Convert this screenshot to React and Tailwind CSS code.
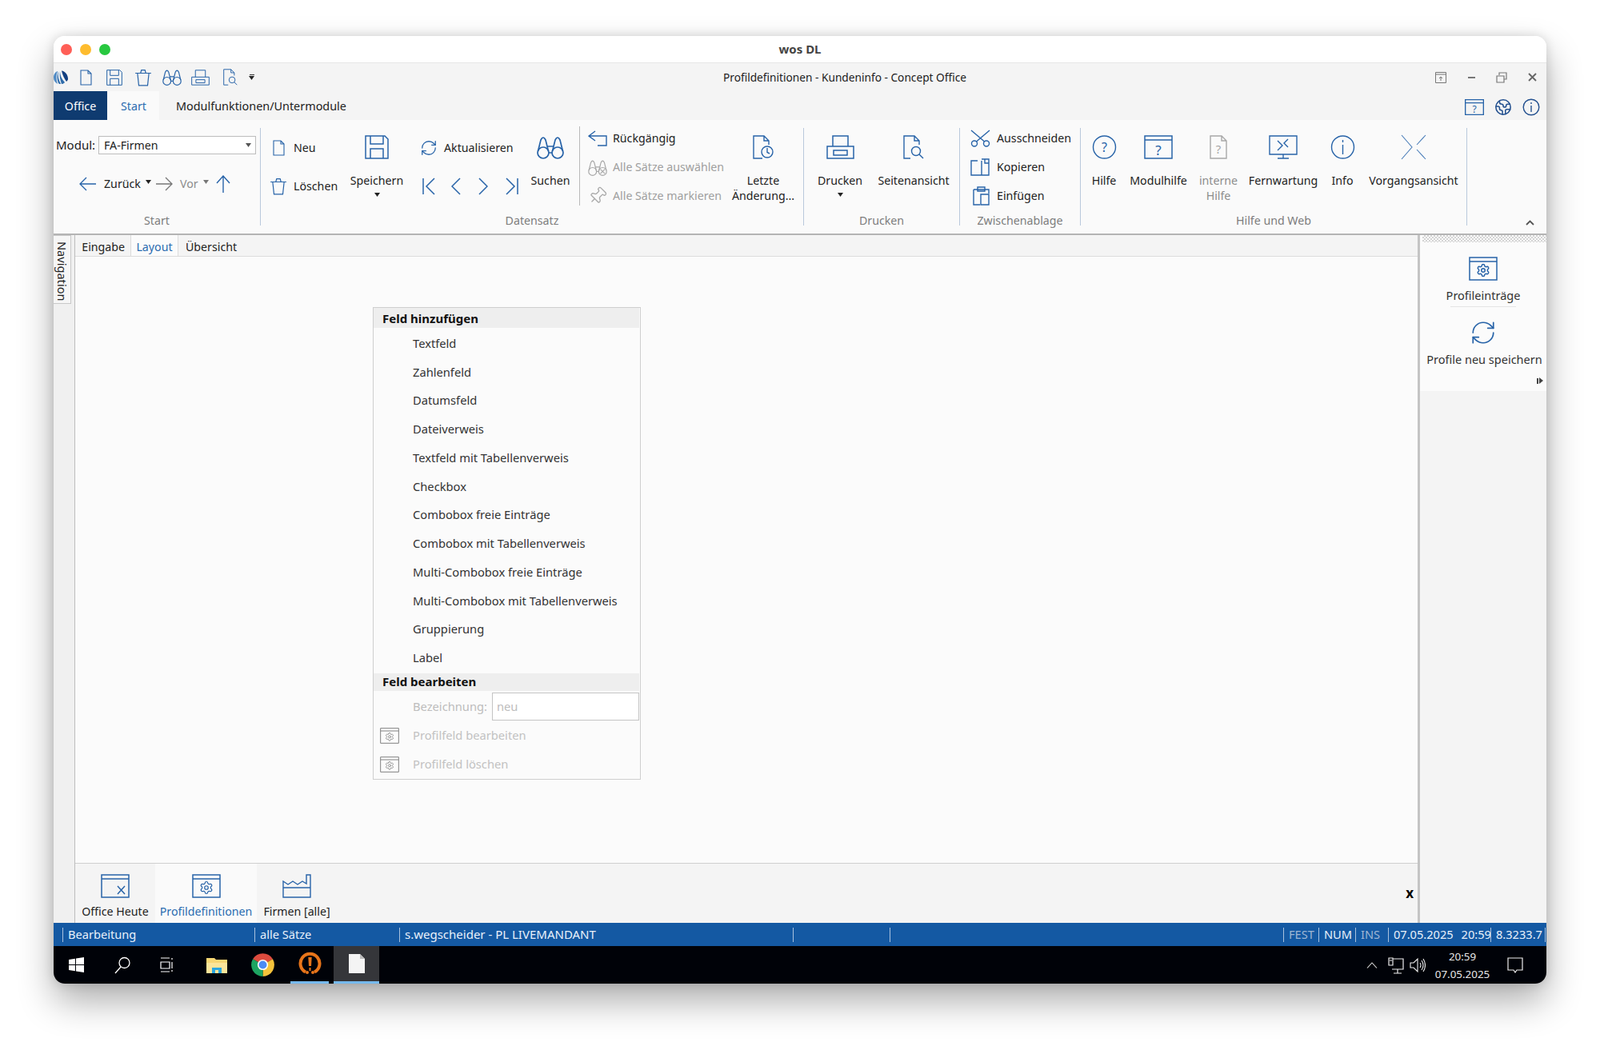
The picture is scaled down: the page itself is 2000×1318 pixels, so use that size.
import { Settings, RefreshCw, Pin, Earth } from "lucide-react";

const BLUE = "#2763a8";
const GRAY = "#a8a8a8";

// generic outline icon, sizes are the real pixel box of the drawing
function Ico({ w, h, vw, vh, c = BLUE, sw = 1.4, children, className = "" }) {
  return (
    <svg
      width={w}
      height={h}
      viewBox={`0 0 ${vw || w} ${vh || h}`}
      fill="none"
      stroke={c}
      strokeWidth={sw}
      className={`block shrink-0 ${className}`}
    >
      {children}
    </svg>
  );
}

const DocIco = ({ w = 15, h = 20, c }) => (
  <Ico w={w} h={h} vw={15} vh={20} c={c} sw={1.1}>
    <path d="M1 1H10L14 5V19H1ZM10 1V5H14" />
  </Ico>
);
const SaveIco = ({ s = 30, c }) => (
  <Ico w={s} h={s} vw={30} vh={30} c={c} sw={1.5}>
    <path d="M1 1H25L29 5V29H1ZM7 1V11H23V1M7 29V17H23V29" />
  </Ico>
);
const TrashIco = ({ s = 22, c }) => (
  <Ico w={s} h={s} vw={20} vh={20} c={c} sw={1.1}>
    <path d="M1 5H19M3.5 5L5 19H15L16.5 5M7 5L8 1.5H12L13 5" />
  </Ico>
);
const BinoIco = ({ w = 34, h = 30, c, x }) => (
  <Ico w={w} h={h} vw={34} vh={30} c={c} sw={1.7}>
    <circle cx="8" cy="22" r="7" />
    <circle cx="26" cy="22" r="7" />
    <path d="M1.5 20L5 6Q8 0 11 6L14.5 20M19.5 20L23 6Q26 0 29 6L32.5 20M15 22H19M13 14H21" />
    {x && <path d="M22 18L30 26M30 18L22 26" />}
  </Ico>
);
const PrintIco = ({ w = 35, h = 30, c }) => (
  <Ico w={w} h={h} vw={35} vh={30} c={c} sw={1.5}>
    <path d="M1 14H34V29H1ZM8 14V1H27V14M9 19H26V25H9Z" />
  </Ico>
);
const PreviewIco = ({ w = 26, h = 30, c }) => (
  <Ico w={w} h={h} vw={26} vh={30} c={c} sw={1.4}>
    <path d="M9 29H1V1H14L20 7V12M14 1V7H20" />
    <circle cx="16" cy="20" r="5.5" />
    <path d="M20 24L25 29" />
  </Ico>
);
const ClockDocIco = () => (
  <Ico w={27} h={30} sw={1.4}>
    <path d="M12 29H1V1H14L20 7V12M14 1V7H20" />
    <circle cx="18" cy="21" r="7" />
    <path d="M18 16V21.5L21 23" />
  </Ico>
);
const NavIco = ({ d, w = 16 }) => (
  <Ico w={w} h={22} sw={1.5}>
    <path d={d} />
  </Ico>
);
const WinIco = ({ children, w = 36, h = 30, c }) => (
  <Ico w={w} h={h} vw={36} vh={30} c={c} sw={1.5}>
    <path d="M1 1H35V29H1ZM1 6H35" />
    {children}
  </Ico>
);
const GearWin = ({ w = 36, h = 30, c = BLUE, sw = 1.6 }) => (
  <WinIco w={w} h={h} c={c}>
    <Settings x="9" y="8" width="18" height="18" stroke={c} strokeWidth={sw} />
  </WinIco>
);
const Mark = ({ t, c = BLUE, x, y, size = 15 }) => (
  <text
    x={x}
    y={y}
    textAnchor="middle"
    fontFamily="Noto Sans, sans-serif"
    fontSize={size}
    fill={c}
    stroke="none"
  >
    {t}
  </text>
);

function Caret({ c = "#222", className = "" }) {
  return (
    <svg width="7" height="5" viewBox="0 0 7 5" className={`block shrink-0 ${className}`}>
      <path d="M0 0H7L3.5 5Z" fill={c} />
    </svg>
  );
}

// ribbon button with the icon on top
function BigBtn({ width, icon, label, line2, caret, muted }) {
  return (
    <div className={`flex shrink-0 flex-col items-center pt-[9px] ${width}`}>
      <div className="flex h-[30px] items-center justify-center">{icon}</div>
      <div
        className={`mt-[17px] whitespace-nowrap text-center leading-[19px] ${
          muted ? "text-[#8d8d8d]" : "text-[#222]"
        }`}
      >
        {label}
        {line2 && <div>{line2}</div>}
      </div>
      {caret && <Caret className="mt-[6px]" />}
    </div>
  );
}

function SmallBtn({ icon, label, muted, iconBox = "w-[31px]" }) {
  return (
    <div className="flex h-[36px] items-center">
      <div className={`flex items-center ${iconBox}`}>{icon}</div>
      <span className={`whitespace-nowrap ${muted ? "text-[#a0a0a0]" : "text-[#222]"}`}>{label}</span>
    </div>
  );
}

function Group({ width, caption, children }) {
  return (
    <div className={`mt-[10px] flex h-[122px] shrink-0 flex-col border-r border-[#b9c9dc] ${width}`}>
      <div className="flex h-[106px] shrink-0">{children}</div>
      <div className="h-[20px] shrink-0 text-center leading-[20px] text-[#7d7d7d]">{caption}</div>
    </div>
  );
}

function QuickBar() {
  return (
    <div className="relative flex h-[35px] items-center bg-[#f4f4f4]">
      <svg width="19" height="18" viewBox="0 0 19 18" fill="none" className="block shrink-0">
        <path d="M0 9C0 5 2 2 5 1C3 5 3 12 5 17C2 15 0 13 0 9Z" fill="#4f8ac4" />
        <path d="M6 1C5 6 6 12 9 17C7 17 7 17 6 16C4 12 4 5 6 1Z" fill="#2f6cab" />
        <path d="M8 1C8 6 10 11 14 15C12 17 11 17 10 17C8 12 7 6 8 1Z" fill="#2f6cab" />
        <path d="M10 0.5C14 1 18 5 18 11C18 12 17 13 16 14C13 10 11 5 10 0.5Z" fill="#123f80" />
      </svg>
      <div className="ml-[14px]"><DocIco w={15} h={20} /></div>
      <div className="ml-[18px]"><SaveIco s={20} /></div>
      <div className="ml-[15px]"><TrashIco s={22} /></div>
      <div className="ml-[13px]"><BinoIco w={24} h={21} /></div>
      <div className="ml-[12px]"><PrintIco w={23} h={20} /></div>
      <div className="ml-[17px]"><PreviewIco w={18} h={21} /></div>
      <div className="ml-[14px] flex flex-col items-center gap-[1px]">
        <div className="h-[1px] w-[6px] bg-[#333]" />
        <Caret />
      </div>
      <div className="absolute left-0 right-0 top-0 flex h-[35px] items-center justify-center pt-[1px] text-[13.7px] text-[#222]">
        <span className="ml-[112px]">Profildefinitionen - Kundeninfo - Concept Office</span>
      </div>
      <div className="relative ml-auto mr-[11px] flex items-center gap-[24px]">
        <div className="flex w-[14px] justify-center">
          <svg width="14" height="14" viewBox="0 0 14 14" fill="none" stroke="#777" className="block">
            <path d="M.5.5H13.5V13.5H.5ZM.5 3H13.5M7 11V6M5 8L7 6L9 8" />
          </svg>
        </div>
        <div className="flex w-[14px] justify-center">
          <div className="h-[2px] w-[9px] bg-[#777]" />
        </div>
        <div className="flex w-[14px] justify-center">
          <svg width="14" height="14" viewBox="0 0 14 14" fill="none" stroke="#777" strokeWidth="1.2" className="block">
            <path d="M4 4V1H13V9H10M1 5H10V13H1Z" />
          </svg>
        </div>
        <div className="flex w-[14px] justify-center">
          <svg width="11" height="11" viewBox="0 0 11 11" fill="none" stroke="#666" strokeWidth="1.9" className="block">
            <path d="M1 1L10 10M10 1L1 10" />
          </svg>
        </div>
      </div>
    </div>
  );
}

function TabsBar() {
  return (
    <div className="flex h-[36px] items-stretch bg-[#f4f4f4]">
      <div className="flex w-[67px] items-center justify-center bg-[#0f3b70] pt-[1px] text-white">Office</div>
      <div className="flex w-[65px] items-center justify-center bg-[#fafafa] pl-[1px] pt-[1px] text-[#2b6cb0]">Start</div>
      <div className="ml-[21px] flex items-center pt-[1px] text-[14.4px] text-[#222]">Modulfunktionen/Untermodule</div>
      <div className="ml-auto mr-[8px] flex items-center gap-[13px] pt-[4px]">
        <Ico w={24} h={20} vw={36} vh={30} sw={2}>
          <path d="M1 1H35V29H1ZM1 7H35" />
          <Mark t="?" x="18" y="26" size="18" />
        </Ico>
        <Earth size={22} color="#23508f" strokeWidth={1.7} />
        <Ico w={22} h={22} vw={22} vh={22} c="#23508f" sw={1.4}>
          <circle cx="11" cy="11" r="9.8" />
          <path d="M11 9V17M11 5V7" />
        </Ico>
      </div>
    </div>
  );
}

function Ribbon() {
  return (
    <div className="relative flex h-[144px] border-b-2 border-[#b4b4b4] bg-[#fafafa]">
      <Group width="w-[259px]" caption="Start">
        <div className="flex flex-col pl-[3px]">
          <div className="mt-[10px] flex h-[23px] items-center">
            <span className="mr-[4px] w-[49px] overflow-hidden whitespace-nowrap text-[15px] text-[#222]">Modul:</span>
            <div className="flex h-[23px] w-[197px] items-center justify-between border border-[#bdbdbd] bg-white pl-[6px] pr-[5px] text-[#222]">
              FA-Firmen
              <Caret c="#555" />
            </div>
          </div>
          <div className="ml-[29px] mt-[25px] flex h-[24px] items-center">
            <Ico w={21} h={18} c={BLUE} sw={1.3}><path d="M9 1L1 9L9 17M1 9H21" /></Ico>
            <span className="ml-[10px] text-[#222]">Zurück</span>
            <Caret className="ml-[6px] mb-[6px]" />
            <Ico w={21} h={18} c="#777" sw={1.3} className="ml-[6px]"><path d="M12 1L20 9L12 17M0 9H20" /></Ico>
            <span className="ml-[9px] text-[#8d8d8d]">Vor</span>
            <Caret c="#777" className="ml-[6px] mb-[6px]" />
            <Ico w={20} h={22} c={BLUE} sw={1.4} className="ml-[8px]"><path d="M2 10L10 1L18 10M10 1V22" /></Ico>
          </div>
        </div>
      </Group>

      <Group width="w-[679px]" caption="Datensatz">
        <div className="w-[115px] shrink-0 pt-[1px]">
          <div className="ml-[15px] flex h-[48px] items-center">
            <DocIco />
            <span className="ml-[11px] text-[#222]">Neu</span>
          </div>
          <div className="ml-[11px] flex h-[48px] items-center">
            <TrashIco />
            <span className="ml-[8px] text-[#222]">Löschen</span>
          </div>
        </div>
        <BigBtn width="w-[60px]" icon={<SaveIco />} label="Speichern" caret />
        <div className="w-[157px] shrink-0 pl-[24px] pt-[1px]">
          <div className="flex h-[48px] items-center">
            <RefreshCw size={22} color={BLUE} strokeWidth={1.4} />
            <span className="ml-[8px] text-[#222]">Aktualisieren</span>
          </div>
          <div className="ml-[3px] flex h-[48px] items-center gap-[20px]">
            <NavIco d="M1 1V21M15 1L5 11L15 21" />
            <NavIco w={12} d="M11 1L1 11L11 21" />
            <div className="ml-[2px]"><NavIco w={12} d="M1 1L11 11L1 21" /></div>
            <div className="ml-[2px]"><NavIco d="M15 1V21M1 1L11 11L1 21" /></div>
          </div>
        </div>
        <BigBtn width="w-[60px]" icon={<BinoIco />} label="Suchen" />
        <div className="ml-[6px] mt-[-2px] h-[99px] w-[1px] shrink-0 bg-[#b9b9b9]" />
        <div className="mt-[-5px] w-[189px] shrink-0 pl-[10px]">
          <SmallBtn
            icon={<Ico w={24} h={20}><path d="M9 1L1 7L9 13M1 7H23V19H12" /></Ico>}
            label="Rückgängig"
          />
          <SmallBtn icon={<BinoIco w={24} h={21} c={GRAY} x />} label="Alle Sätze auswählen" muted />
          <SmallBtn
            icon={<Pin size={24} color={GRAY} strokeWidth={1.3} className="rotate-45" />}
            label="Alle Sätze markieren"
            muted
          />
        </div>
        <BigBtn width="w-[80px]" icon={<ClockDocIco />} label="Letzte" line2="Änderung..." />
      </Group>

      <Group width="w-[195px]" caption="Drucken">
        <BigBtn width="w-[80px] ml-[5px]" icon={<PrintIco />} label="Drucken" caret />
        <BigBtn width="w-[100px] ml-[2px]" icon={<PreviewIco />} label="Seitenansicht" />
      </Group>

      <Group width="w-[151px]" caption="Zwischenablage">
        <div className="mt-[-5px] pl-[13px]">
          <SmallBtn
            iconBox="w-[33px]"
            icon={
              <Ico w={26} h={22}>
                <circle cx="5" cy="17.5" r="3.5" />
                <circle cx="20" cy="17.5" r="3.5" />
                <path d="M7.5 15L24 1M17.5 15L1 1" />
              </Ico>
            }
            label="Ausschneiden"
          />
          <SmallBtn
            iconBox="w-[33px]"
            icon={
              <Ico w={24} h={22}>
                <path d="M9 3H1V21H14V3M14 1H23V21H14M18 1V6H23" />
              </Ico>
            }
            label="Kopieren"
          />
          <SmallBtn
            iconBox="w-[33px]"
            icon={
              <Ico w={21} h={24} className="ml-[3px]">
                <path d="M1 4H20V9M9 23H1V4M6 1H15V6H6ZM10 10H20V23H10Z" />
              </Ico>
            }
            label="Einfügen"
          />
        </div>
      </Group>

      <Group width="w-[483px]" caption="Hilfe und Web">
        <BigBtn
          width="w-[50px] ml-[4px]"
          icon={
            <Ico w={31} h={30}>
              <circle cx="15.5" cy="15" r="14" />
              <Mark t="?" x="15.5" y="21" size="16" />
            </Ico>
          }
          label="Hilfe"
        />
        <BigBtn
          width="w-[84px] ml-[1px]"
          icon={
            <WinIco>
              <Mark t="?" x="18" y="25" size="17" />
            </WinIco>
          }
          label="Modulhilfe"
        />
        <BigBtn
          width="w-[66px]"
          icon={
            <Ico w={22} h={30} c={GRAY}>
              <path d="M1 1H15L21 7V29H1ZM15 1V7H21" />
              <Mark t="?" x="11" y="23" c={GRAY} size="15" />
            </Ico>
          }
          label="interne"
          line2="Hilfe"
          muted
        />
        <BigBtn
          width="w-[96px]"
          icon={
            <Ico w={36} h={30}>
              <path d="M1 1H35V24H1ZM18 24V29M11 29H25M11 7L17 13L11 19M24 5L19 10L24 15" />
            </Ico>
          }
          label="Fernwartung"
        />
        <BigBtn
          width="w-[52px]"
          icon={
            <Ico w={31} h={30}>
              <circle cx="15.5" cy="15" r="14" />
              <path d="M15.5 12V24M15.5 6V9" />
            </Ico>
          }
          label="Info"
        />
        <BigBtn
          width="w-[126px]"
          icon={
            <Ico w={32} h={32} c="#4a7db8" sw={1.1}>
              <path d="M1 1L14 16L1 31M31 1L20 13M20 19L31 31" />
            </Ico>
          }
          label="Vorgangsansicht"
        />
      </Group>

      <svg width="11" height="7" viewBox="0 0 11 7" fill="none" stroke="#555" strokeWidth="1.8" className="absolute bottom-[10px] right-[15px] block">
        <path d="M1 6L5.5 1.5L10 6" />
      </svg>
    </div>
  );
}

const FIELDS = [
  "Textfeld",
  "Zahlenfeld",
  "Datumsfeld",
  "Dateiverweis",
  "Textfeld mit Tabellenverweis",
  "Checkbox",
  "Combobox freie Einträge",
  "Combobox mit Tabellenverweis",
  "Multi-Combobox freie Einträge",
  "Multi-Combobox mit Tabellenverweis",
  "Gruppierung",
  "Label",
];

function FieldPanel() {
  return (
    <div className="ml-[372px] mt-[63px] h-[591px] w-[335px] border border-[#cfcfcf] text-[14.7px]">
      <div className="mr-[1px] flex h-[25px] items-center bg-[#eeeeee] pl-[11px] pt-[1px] text-[15px] font-bold text-[#111]">
        Feld hinzufügen
      </div>
      <div className="mb-[1px] pt-[2px]">
        {FIELDS.map((f) => (
          <div key={f} className="flex h-[35.75px] items-center pb-[2px] pl-[49px] text-[#333]">
            {f}
          </div>
        ))}
      </div>
      <div className="mr-[1px] flex h-[22px] items-center bg-[#eeeeee] pb-[2px] pl-[11px] text-[15px] font-bold text-[#111]">
        Feld bearbeiten
      </div>
      <div className="mb-[1px] mt-[2px] flex h-[35px] items-center pl-[49px] text-[#bdbdbd]">
        <span className="w-[99px] whitespace-nowrap">Bezeichnung:</span>
        <div className="flex h-[35px] w-[184px] items-center border border-[#c4c4c4] bg-white pl-[5px]">neu</div>
      </div>
      {["Profilfeld bearbeiten", "Profilfeld löschen"].map((f) => (
        <div key={f} className="flex h-[36px] items-center pb-[1px] text-[#c2c2c2]">
          <div className="ml-[8px] mr-[17px]">
            <GearWin w={24} h={20} c="#808080" />
          </div>
          {f}
        </div>
      ))}
    </div>
  );
}

function BottomTab({ width, icon, label, active }) {
  return (
    <div
      className={`flex shrink-0 flex-col items-center pt-[13px] ${width} ${
        active ? "bg-[#fafafa] text-[#2b6cb0]" : "text-[#222]"
      }`}
    >
      {icon}
      <span className="mt-[7px] whitespace-nowrap leading-[20px]">{label}</span>
    </div>
  );
}

function Workspace() {
  return (
    <div className="flex min-w-0 flex-1 flex-col border-l border-[#bdbdbd]">
      <div className="flex h-[27px] items-stretch border-b border-[#dcdcdc] bg-[#f4f4f4]">
        <div className="flex w-[69px] items-center justify-end pr-[7px] pt-[3px] text-[#222]">Eingabe</div>
        <div className="flex w-[60px] items-center justify-center border-x border-[#dcdcdc] bg-[#fbfbfb] pt-[3px] text-[#2b6cb0]">
          Layout
        </div>
        <div className="ml-[9px] flex items-center pt-[3px] text-[#222]">Übersicht</div>
      </div>
      <div className="h-[758px] bg-[#fbfbfb]">
        <FieldPanel />
      </div>
      <div className="flex h-[75px] items-stretch border-t border-[#cfcfcf] bg-[#f4f4f4]">
        <BottomTab
          width="w-[100px]"
          icon={
            <WinIco>
              <path d="M21 15L30 25M30 15L21 25" />
            </WinIco>
          }
          label="Office Heute"
        />
        <BottomTab width="w-[127px]" icon={<GearWin />} label="Profildefinitionen" active />
        <BottomTab
          width="w-[100px]"
          icon={
            <Ico w={36} h={30}>
              <path d="M1 29V17H35V29ZM1 17V9L7 13L13 9L19 13L25 9L30 12V1H35V17" />
            </Ico>
          }
          label="Firmen [alle]"
        />
        <div className="ml-auto mr-[5px] flex items-center pb-[1px] text-[17px] font-bold leading-none text-black">
          x
        </div>
      </div>
    </div>
  );
}

function SidePanel() {
  return (
    <div className="flex w-[161px] shrink-0 flex-col border-l-[3px] border-[#c4c4c4]">
      <div className="h-[195px] bg-[#fbfbfb] text-[14.5px]">
        <div className="ml-[3px] h-[9px] bg-[conic-gradient(#d4d4d4_25%,#fbfbfb_0_50%,#d4d4d4_0_75%,#fbfbfb_0)] bg-[length:4px_4px]" />
        <div className="flex flex-col items-center pt-[18px] text-[#333]">
          <GearWin sw={2} />
          <span className="mt-[8px] leading-[20px]">Profileinträge</span>
          <div className="mt-[4px] h-[1px] w-[82px] bg-[#e4e4e4]" />
          <RefreshCw size={34} color={BLUE} strokeWidth={1.2} className="mt-[15px]" />
          <span className="ml-[3px] mt-[6px] whitespace-nowrap leading-[20px]">Profile neu speichern</span>
        </div>
        <div className="mr-[4px] mt-[13px] flex items-center justify-end gap-[1px]">
          <div className="h-[7px] w-[2px] bg-[#444]" />
          <div className="h-0 w-0 border-y-[4px] border-l-[5px] border-y-transparent border-l-[#444]" />
        </div>
      </div>
      <div className="flex-1 bg-[#f4f4f4]" />
    </div>
  );
}

function StatusCell({ width, children, dim, auto }) {
  return (
    <div className={`flex h-[18px] items-center whitespace-nowrap border-l border-[#a9c1de] pl-[6px] ${auto ? "flex-1" : "shrink-0"} ${width || ""} ${dim ? "text-[#9fb6d4]" : "text-[#e8f0fa]"}`}>
      {children}
    </div>
  );
}

function StatusBar() {
  return (
    <div className="flex h-[29px] items-center bg-[#1459a3] pl-[11px] pr-[1px] text-[14.6px]">
      <StatusCell width="w-[240px]">Bearbeitung</StatusCell>
      <StatusCell width="w-[181px]">alle Sätze</StatusCell>
      <StatusCell width="w-[492px]"><span className="text-[15px]">s.wegscheider - PL LIVEMANDANT</span></StatusCell>
      <StatusCell width="w-[121px]" />
      <StatusCell auto />
      <StatusCell width="w-[44px]" dim>FEST</StatusCell>
      <StatusCell width="w-[46px]">NUM</StatusCell>
      <StatusCell width="w-[41px]" dim>INS</StatusCell>
      <StatusCell width="w-[128px]">
        <span>07.05.2025</span>
        <span className="ml-[10px]">20:59</span>
      </StatusCell>
      <StatusCell width="w-[68px]">8.3233.7</StatusCell>
      <div className="h-[18px] w-[1px] bg-[#a9c1de]" />
    </div>
  );
}

function Taskbar() {
  return (
    <div className="flex h-[47px] items-stretch bg-[#000208] text-[13.4px] text-[#e8e8e8]">
      <div className="ml-[19px] flex items-center">
        <svg width="19" height="19" viewBox="0 0 19 19" fill="#fff" className="block">
          <path d="M0 3L8 1.8V9H0ZM9 1.6L19 0V9H9ZM0 10H8V17.2L0 16ZM9 10H19V19L9 17.4Z" />
        </svg>
      </div>
      <div className="ml-[38px] flex items-center">
        <svg width="20" height="22" viewBox="0 0 20 22" fill="none" stroke="#fff" strokeWidth="1.3" className="block">
          <circle cx="12.5" cy="8" r="6.5" />
          <path d="M8 13L1 21" />
        </svg>
      </div>
      <div className="ml-[37px] flex items-center">
        <svg width="18" height="19" viewBox="0 0 18 19" fill="none" stroke="#fff" strokeWidth="1.2" className="block">
          <path d="M1 1H12M1 18H12M1 6H12V14H1ZM15 1V3M15 6V14M15 16V18" />
        </svg>
      </div>
      <div className="ml-[40px] flex items-center">
        <svg width="26" height="21" viewBox="0 0 26 21" className="block">
          <path d="M0 2H10L12 4H26V21H0Z" fill="#f7d774" />
          <path d="M0 8H26V21H0Z" fill="#fbe59a" />
          <path d="M7 21V14H19V21H15V17H11V21Z" fill="#2aa7e0" />
        </svg>
      </div>
      <div className="ml-[30px] flex items-center">
        <svg width="29" height="29" viewBox="0 0 29 29" className="block">
          <path d="M14.5 14.5L2 7.3A14.5 14.5 0 0 1 27 7.3Z" fill="#dd4b3e" />
          <path d="M14.5 14.5L27 7.3A14.5 14.5 0 0 1 14.5 29Z" fill="#f5c33b" />
          <path d="M14.5 14.5L14.5 29A14.5 14.5 0 0 1 2 7.3Z" fill="#1da462" />
          <circle cx="14.5" cy="14.5" r="6.6" fill="#fff" />
          <circle cx="14.5" cy="14.5" r="5" fill="#4c8bf5" />
        </svg>
      </div>
      <div className="ml-[20px] flex w-[48px] items-center justify-center border-b-[3px] border-[#76b9ed]">
        <svg width="29" height="31" viewBox="0 0 29 31" className="block">
          <path d="M9 25.5A12 12 0 1 1 20 25.5" fill="none" stroke="#e8751a" strokeWidth="4" />
          <path d="M12.3 7H16.7L16 18H13Z" fill="#e8751a" />
          <circle cx="11" cy="26" r="2" fill="#e8751a" />
          <circle cx="18" cy="26" r="2" fill="#e8751a" />
          <path d="M13.5 20H15.5V24H13.5Z" fill="#e8751a" />
        </svg>
      </div>
      <div className="ml-[6px] flex w-[57px] items-center justify-center border-b-[3px] border-[#76b9ed] bg-[#35363a]">
        <svg width="20" height="24" viewBox="0 0 20 24" className="block">
          <path d="M0 0H14L20 6V24H0Z" fill="#f4f4f4" />
          <path d="M14 0L20 6H14Z" fill="#bbb" />
        </svg>
      </div>
      <div className="ml-auto flex items-center">
        <svg width="14" height="8" viewBox="0 0 14 8" fill="none" stroke="#ddd" strokeWidth="1.1" className="block">
          <path d="M1 7.5L7 1L13 7.5" />
        </svg>
        <svg width="20" height="22" viewBox="0 0 20 22" fill="none" stroke="#eee" strokeWidth="1.2" className="ml-[13px] block">
          <path d="M6 3H19V16H5M12 16V21M7 21H17M1 2H6V11H1ZM2 5H5" />
        </svg>
        <svg width="20" height="22" viewBox="0 0 20 22" fill="none" stroke="#eee" strokeWidth="1.1" className="ml-[7px] block">
          <path d="M1 8H5L10 3V19L5 14H1ZM13 8Q15 11 13 14M15 5Q19 11 15 17M17 3Q22 11 17 19" />
        </svg>
        <div className="ml-[12px] flex w-[68px] flex-col items-center leading-[22px]">
          <span>20:59</span>
          <span>07.05.2025</span>
        </div>
        <svg width="20" height="20" viewBox="0 0 20 20" fill="none" stroke="#eee" strokeWidth="1.2" className="ml-[22px] mr-[29px] block">
          <path d="M1 1H19V16H12L10 19L8 16H1Z" />
        </svg>
      </div>
    </div>
  );
}

export default function App() {
  return (
    <div className="h-[1318px] w-[2000px] overflow-hidden bg-white pl-[67px] pt-[45px] text-[14.2px] [font-family:'Noto_Sans',sans-serif]">
      <div className="flex h-[1185px] w-[1866px] flex-col overflow-hidden rounded-[14px] shadow-[0_22px_45px_rgba(0,0,0,0.32),0_0_14px_rgba(0,0,0,0.14)]">
        <div className="relative flex h-[34px] items-center justify-center border-b border-[#e6e6e6] bg-white">
          <div className="absolute left-[9px] top-[10px] flex gap-[10px]">
            <div className="h-[14px] w-[14px] rounded-full bg-[#ff5f57]" />
            <div className="h-[14px] w-[14px] rounded-full bg-[#febc2e]" />
            <div className="h-[14px] w-[14px] rounded-full bg-[#28c840]" />
          </div>
          <span className="text-[15px] font-bold text-[#444] [font-family:'Liberation_Sans',sans-serif]">wos DL</span>
        </div>
        <QuickBar />
        <TabsBar />
        <Ribbon />
        <div className="flex h-[860px]">
          <div className="w-[26px] shrink-0 bg-[#f0f0f0]">
            <div className="flex h-[86px] w-[22px] justify-center border border-l-0 border-[#c8c8c8] bg-[#f6f6f6] pt-[4px] text-[14.6px] leading-[20px] text-[#222] [writing-mode:vertical-rl]">
              Navigation
            </div>
          </div>
          <Workspace />
          <SidePanel />
        </div>
        <StatusBar />
        <Taskbar />
      </div>
    </div>
  );
}
